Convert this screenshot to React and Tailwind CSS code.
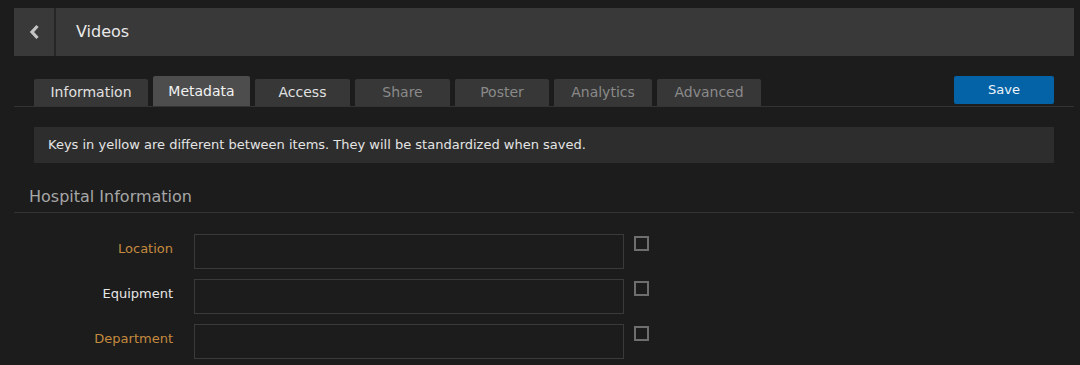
import React from 'react';

const tabs = [
    { label: 'Information', w: 'w-[114px]', state: 'on' },
    { label: 'Metadata', w: 'w-[97px]', state: 'active' },
    { label: 'Access', w: 'w-[95px]', state: 'on' },
    { label: 'Share', w: 'w-[95px]', state: 'off' },
    { label: 'Poster', w: 'w-[94px]', state: 'off' },
    { label: 'Analytics', w: 'w-[98px]', state: 'off' },
    { label: 'Advanced', w: 'w-[104px]', state: 'off' },
];

const fields = [
    { label: 'Location', color: 'text-[#c48a3f]' },
    { label: 'Equipment', color: 'text-[#e6e6e6]' },
    { label: 'Department', color: 'text-[#c48a3f]' },
];

function Tab({ label, w, state }) {
    if (state === 'active') {
        return (
            <div className={`${w} h-[30px] flex items-center justify-center bg-[#4d4d4d] text-[#f2f2f2] rounded-t-[2px]`}>
                {label}
            </div>
        );
    }
    return (
        <div className={`${w} h-[27px] flex items-center justify-center bg-[#373737] rounded-t-[2px] ${state === 'on' ? 'text-[#e0e0e0]' : 'text-[#8a8a8a]'}`}>
            {label}
        </div>
    );
}

export default function App() {
    return (
        <div className="w-[1080px] h-[365px] bg-[#1c1c1c] overflow-hidden pt-2 font-['DejaVu_Sans',sans-serif]">
            <div className="ml-[14px] mr-[6px] h-[48px] bg-[#393939] flex items-stretch">
                <div className="w-[42px] flex items-center justify-center border-r-2 border-[#262626]">
                    <svg width="11" height="16" viewBox="0 0 11 16">
                        <path d="M8.5 2 L3 8 L8.5 14" fill="none" stroke="#c4c4c4" strokeWidth="3.2" />
                    </svg>
                </div>
                <div className="flex items-center pl-5 text-[16px] text-[#e8e8e8]">Videos</div>
            </div>

            <div className="ml-[14px] mr-[6px] mt-[22px] flex items-end border-b border-[#333] pl-5 pr-5 h-[29px]">
                <div className="flex items-end gap-[5px] text-[14px]">
                    {tabs.map((t) => (
                        <Tab key={t.label} {...t} />
                    ))}
                </div>
                <div className="ml-auto self-start -mt-[2px]">
                    <div className="w-[100px] h-[28px] bg-[#0363a6] rounded-[2px] flex items-center justify-center text-[13px] text-[#eef4fa]">
                        Save
                    </div>
                </div>
            </div>

            <div className="ml-[34px] mr-[26px] mt-[20px] h-[36px] bg-[#2d2d2d] flex items-center pl-[14px] text-[13px] text-[#e4e4e4]">
                Keys in yellow are different between items. They will be standardized when saved.
            </div>

            <div className="ml-[14px] mr-[6px] mt-[24px] h-[26px] border-b border-[#333] pl-[15px] text-[16px] text-[#a6a6a6] leading-[20px]">
                Hospital Information
            </div>

            <div className="mt-[21px] flex flex-col gap-[10px]">
                {fields.map((f) => (
                    <div key={f.label} className="flex items-start">
                        <div className={`w-[173px] h-[35px] pb-[5px] flex items-center justify-end text-[13px] ${f.color}`}>
                            {f.label}
                        </div>
                        <div className="ml-[21px] w-[430px] h-[35px] border border-[#3a3a3a]"></div>
                        <div className="ml-[10px] mt-[2px] w-[15px] h-[15px] border-2 border-[#6e6e6e]"></div>
                    </div>
                ))}
            </div>
        </div>
    );
}
